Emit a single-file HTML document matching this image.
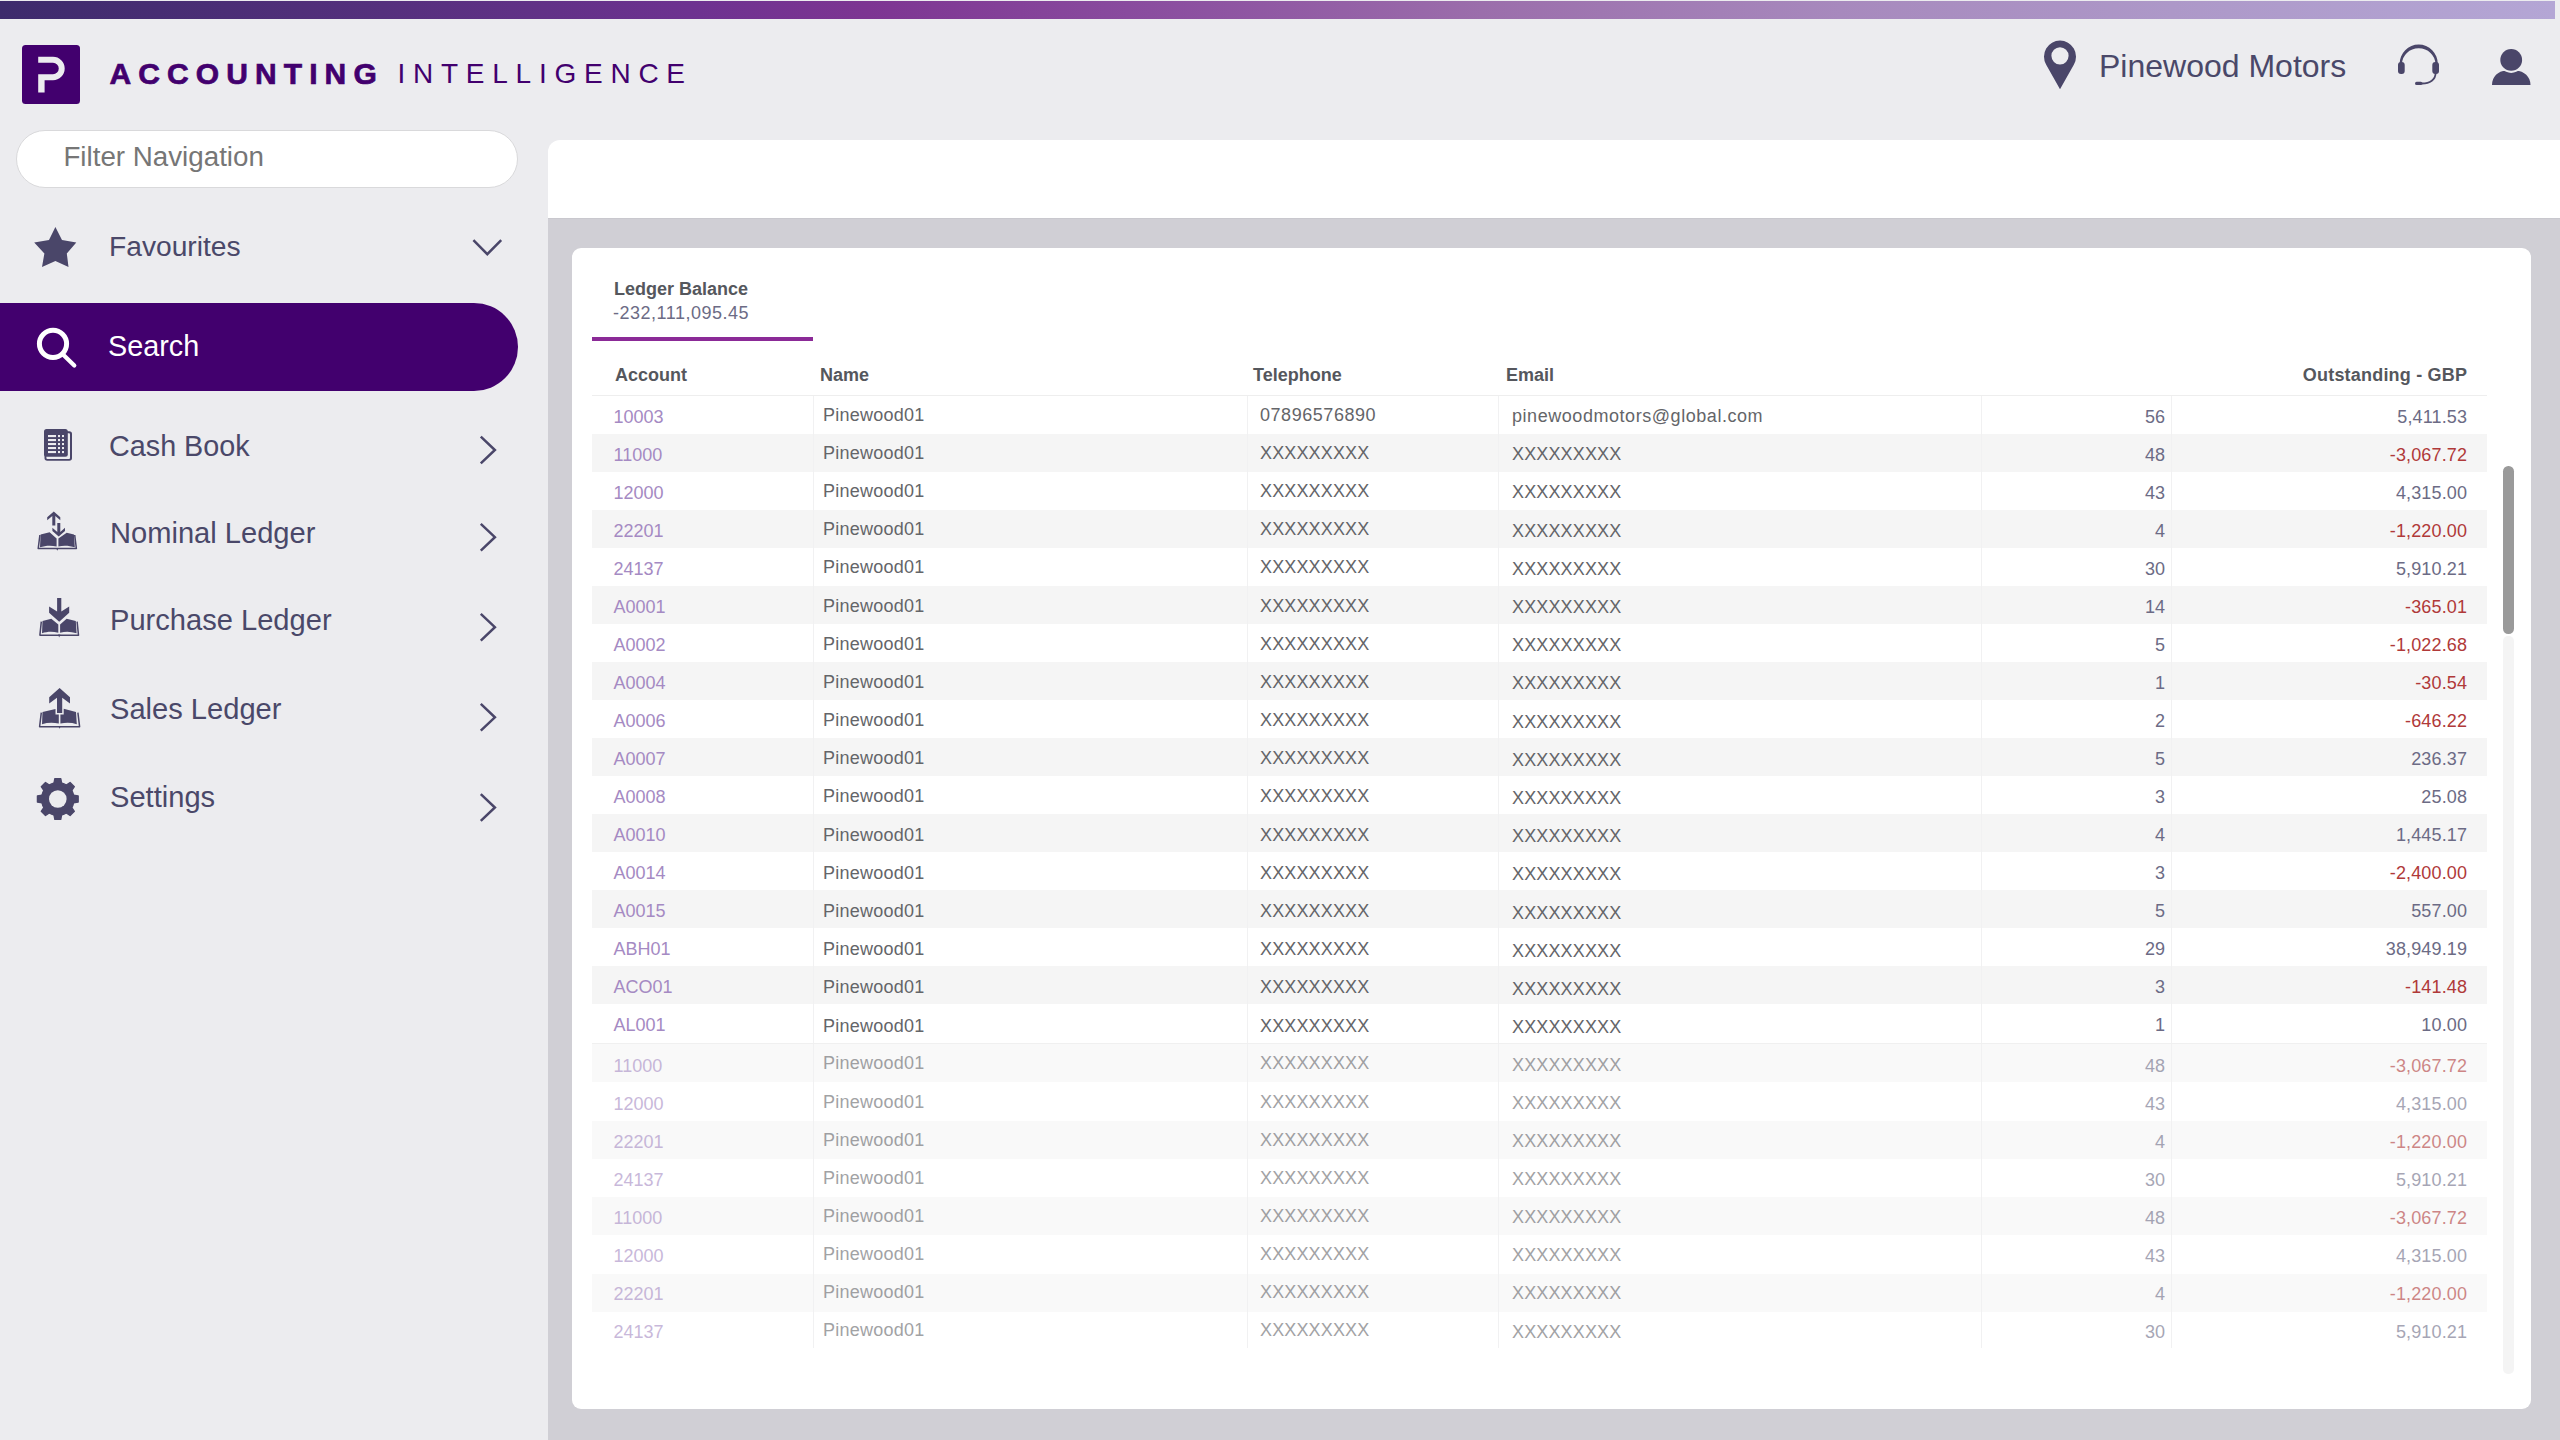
<!DOCTYPE html>
<html><head><meta charset="utf-8">
<style>
html,body{margin:0;padding:0}
body{width:2560px;height:1440px;overflow:hidden;position:relative;background:#ececef;font-family:"Liberation Sans",sans-serif}
.t{position:absolute;line-height:1;white-space:nowrap;font-size:18px}
.abs{position:absolute}
#topbar{position:absolute;left:0;top:1px;width:2555px;height:17.5px;background:linear-gradient(90deg,#3d2b6c 0%,#55307d 15%,#6d3290 27%,#7d3592 34%,#8a4d9f 45%,#9b6eab 58%,#a789bd 72%,#ad98c8 85%,#b4a6d5 100%)}
.side{color:#4a4869}
#main{position:absolute;left:548px;top:218px;width:2012px;height:1222px;background:#d0cfd5}
#strip{position:absolute;left:548px;top:140px;width:2012px;height:78px;background:#fff;border-top-left-radius:12px}
#card{position:absolute;left:572px;top:248px;width:1959px;height:1161px;background:#fff;border-radius:9px}
.stripe{position:absolute;left:592px;width:1895px;background:#f5f5f5}
.stripe.f{background:#f9f9f9}
.sep{position:absolute;top:396px;width:1px;height:952px;background:#f1f1f2}
.acc{color:#a58ac3}
.nm{color:#646569}
.num{color:#6c6b85}
.neg{color:#b03939}
.fd{opacity:.6}
.hd{color:#55575d;font-weight:bold}
</style></head>
<body>
<div id="topbar"></div>

<!-- logo -->
<svg class="abs" style="left:22px;top:45px" width="58" height="59" viewBox="0 0 58 59">
<rect x="0" y="0" width="58" height="59" rx="3.5" fill="#42006e"/>
<path fill="#ececef" fill-rule="evenodd" d="M16.2 11.8 H31 A11.7 11.7 0 0 1 31 35.2 H22.6 V47.5 H16.2 V29.3 H31 A5.75 5.75 0 0 0 31 17.8 H16.2 Z"/>
</svg>
<div class="t" style="left:109.5px;top:58.61px;font-size:30px;font-weight:bold;color:#42006e;letter-spacing:7.1px;-webkit-text-stroke:0.7px #42006e">ACCOUNTING</div>
<div class="t" style="left:397.5px;top:60.30px;font-size:28px;color:#42006e;letter-spacing:7.75px">INTELLIGENCE</div>

<!-- header right -->
<svg class="abs" style="left:2044px;top:40px" width="32" height="51" viewBox="0 0 32 51">
<path fill="#4a4669" fill-rule="evenodd" d="M16 49.3 L2.05 24.43 A16 16 0 1 1 29.95 24.43 Z M16 7.2 A8.6 8.6 0 1 0 16 24.4 A8.6 8.6 0 1 0 16 7.2 Z"/>
</svg>
<div class="t side" style="left:2099px;top:49.9px;font-size:32px;color:#4a4869">Pinewood Motors</div>
<svg class="abs" style="left:2396px;top:42px" width="46" height="46" viewBox="0 0 46 46">
<path d="M3.6 22 A19.1 19.6 0 0 1 41.8 22 L39.4 22 A16.7 15.7 0 0 0 6 22 Z" fill="#4a4669"/>
<rect x="2" y="20" width="6.7" height="12" rx="3" fill="#4a4669"/>
<rect x="36.3" y="20" width="6.7" height="12" rx="3" fill="#4a4669"/>
<path d="M39.6 31 C39.6 37.5 34 41.5 26 41.5" fill="none" stroke="#4a4669" stroke-width="1.8"/>
<rect x="19" y="39.8" width="7.5" height="3.3" rx="1.65" fill="#4a4669"/>
</svg>
<svg class="abs" style="left:2488px;top:46px" width="46" height="42" viewBox="2488 46 46 42">
<path fill="#4a4669" d="M2492 85 C2492 77 2498 70.8 2506 70.8 H2516 C2524 70.8 2530.5 77 2530.5 85 Z"/>
<circle cx="2511.2" cy="59.9" r="13" fill="#ececef"/>
<circle cx="2511.2" cy="59.9" r="10.9" fill="#4a4669"/>
</svg>

<!-- sidebar -->
<div class="abs" style="left:16px;top:130px;width:500px;height:56px;border:1px solid #d9d9db;border-radius:29px;background:#fff"></div>
<div class="t" style="left:63.4px;top:142.91px;font-size:27.75px;color:#767676">Filter Navigation</div>

<svg class="abs" style="left:30px;top:222px" width="52" height="50" viewBox="30 222 52 50">
<polygon fill="#4a4669" points="55.4,226.9 62,240 76.3,242.5 66.8,253.4 68.5,267 55.4,261 42,267 44.4,253.4 34.2,242.5 49,240"/>
</svg>
<div class="t side" style="left:109px;top:232.13px;font-size:28.2px">Favourites</div>
<svg class="abs" style="left:468px;top:234px" width="40" height="26" viewBox="468 234 40 26">
<polyline points="473.4,240.2 487.3,254.2 501.2,240.2" fill="none" stroke="#4a4669" stroke-width="2.5"/>
</svg>

<div class="abs" style="left:0;top:303px;width:518px;height:88px;background:#42006e;border-radius:0 44px 44px 0"></div>
<svg class="abs" style="left:30px;top:320px" width="52" height="52" viewBox="30 320 52 52">
<circle cx="53" cy="343.8" r="13.6" fill="none" stroke="#fff" stroke-width="5"/>
<line x1="63" y1="354.5" x2="74.3" y2="365.5" stroke="#fff" stroke-width="4.2" stroke-linecap="round"/>
</svg>
<div class="t" style="left:108px;top:331.62px;font-size:28.8px;color:#fff">Search</div>

<!-- cash book -->
<svg class="abs" style="left:40px;top:425px" width="36" height="40" viewBox="40 425 36 40">
<rect x="44.5" y="431.3" width="27.5" height="29.5" rx="2.8" fill="#4a4669"/>
<rect x="46.4" y="433.2" width="23.6" height="25.7" rx="1" fill="#ececef"/>
<rect x="44" y="429" width="23.8" height="27.8" rx="2.5" fill="#4a4669"/>
<g fill="#ececef">
<rect x="48" y="435" width="8" height="2.1"/><rect x="58" y="435" width="2" height="2.1"/><rect x="62" y="435" width="2" height="2.1"/>
<rect x="48" y="439" width="8" height="2.1"/><rect x="58" y="439" width="2" height="2.1"/><rect x="62" y="439" width="2" height="2.1"/>
<rect x="48" y="443" width="8" height="2.1"/><rect x="58" y="443" width="2" height="2.1"/><rect x="62" y="443" width="2" height="2.1"/>
<rect x="48" y="447" width="8" height="2.1"/><rect x="58" y="447" width="2" height="2.1"/><rect x="62" y="447" width="2" height="2.1"/>
<rect x="48" y="451" width="8" height="2.1"/><rect x="58" y="451" width="2" height="2.1"/><rect x="62" y="451" width="2" height="2.1"/>
</g>
</svg>
<div class="t side" style="left:109px;top:431.66px;font-size:28.75px">Cash Book</div>

<!-- nominal ledger icon -->
<svg class="abs" style="left:30px;top:505px" width="60" height="60" viewBox="0 0 60 60">
<g fill="#4a4669">
<path d="M10.6 29.6 L19.6 27.3 L26.6 33.4 L26.6 41.6 C21 40 15 40.6 10 42.3 Z"/>
<path d="M44 29.6 L36.7 27.8 L28.4 33.4 L28.4 41.6 C33.5 40 39.5 40.6 44.8 42.3 Z"/>
<polyline points="9.9,30 8.2,43.6 46.4,43.6 44.7,30" fill="none" stroke="#4a4669" stroke-width="1.5" stroke-linejoin="round"/><path d="M26.1 43 L28.5 43 L27.3 45.8 Z"/>
<path d="M23.8 6.6 L30.3 12.2 L30.3 15.2 L25.3 11 L25.3 20.4 L22.3 20.4 L22.3 11 L17.2 15.2 L17.2 12.2 Z"/>
<path d="M28.7 31.6 L22.4 25.9 L22.4 22.8 L27.3 27.1 L27.3 17.9 L30.3 17.9 L30.3 27.1 L35 22.8 L35 25.9 Z"/>
</g>
</svg>
<div class="t side" style="left:110px;top:518.77px;font-size:29.1px">Nominal Ledger</div>

<!-- purchase ledger icon -->
<svg class="abs" style="left:30px;top:590px" width="60" height="60" viewBox="0 0 60 60">
<g fill="#4a4669">
<path d="M12.5 31 L21.3 28.8 L28.3 34.6 L28.3 42.8 C22.5 41.3 17 41.6 12 43.3 Z"/>
<path d="M45.8 31 L36.6 28.8 L30.1 34.6 L30.1 42.8 C35.5 41.3 41 41.6 46.6 43.3 Z"/>
<polyline points="11.3,31.6 9.9,45.2 48.5,45.2 47.1,31.6" fill="none" stroke="#4a4669" stroke-width="1.5" stroke-linejoin="round"/><path d="M28 44.6 L30.4 44.6 L29.2 47.4 Z"/>
<path d="M27.1 7.9 L31.3 7.9 L31.3 21.5 L39.2 16.5 L39.2 22.8 L29.2 31.7 L19.1 22.8 L19.1 16.5 L27.1 21.5 Z"/>
</g>
</svg>
<div class="t side" style="left:110px;top:606.37px;font-size:29.1px">Purchase Ledger</div>

<!-- sales ledger icon -->
<svg class="abs" style="left:30px;top:680px" width="60" height="60" viewBox="0 0 60 60">
<g fill="#4a4669">
<path d="M12.5 32 L25.5 29 L25.5 34.5 L28.8 34.5 L28.8 43.6 C23 42.3 17.5 42.5 12 44.2 Z"/>
<path d="M46 32 L33.7 28.7 L33.7 34.5 L30.4 34.5 L30.4 43.6 C36 42.3 41.5 42.5 46.8 44.2 Z"/>
<polyline points="11.3,32.6 9.6,46.7 49.6,46.7 47.9,32.6" fill="none" stroke="#4a4669" stroke-width="1.5" stroke-linejoin="round"/><path d="M28.4 46 L30.8 46 L29.6 48.8 Z"/>
<path d="M29.6 8.1 L40 17.3 L40 23.4 L32.2 17.8 L32.2 32.9 L27 32.9 L27 17.8 L19.2 23.4 L19.2 17.3 Z"/>
</g>
</svg>
<div class="t side" style="left:110px;top:695.17px;font-size:29.1px">Sales Ledger</div>

<!-- settings gear -->
<svg class="abs" style="left:30px;top:772px" width="56" height="56" viewBox="-27.8 -27 56 56">
<g fill="#4a4669" stroke="#4a4669" stroke-width="1.3" stroke-linejoin="round">
<circle cx="0" cy="0" r="16.3"/>
<path d="M-3 -20.4 H3 L4.2 -14 H-4.2 Z" transform="rotate(0)"/><path d="M-3 -20.4 H3 L4.2 -14 H-4.2 Z" transform="rotate(45)"/><path d="M-3 -20.4 H3 L4.2 -14 H-4.2 Z" transform="rotate(90)"/><path d="M-3 -20.4 H3 L4.2 -14 H-4.2 Z" transform="rotate(135)"/><path d="M-3 -20.4 H3 L4.2 -14 H-4.2 Z" transform="rotate(180)"/><path d="M-3 -20.4 H3 L4.2 -14 H-4.2 Z" transform="rotate(225)"/><path d="M-3 -20.4 H3 L4.2 -14 H-4.2 Z" transform="rotate(270)"/><path d="M-3 -20.4 H3 L4.2 -14 H-4.2 Z" transform="rotate(315)"/>
</g>
<circle cx="0" cy="0" r="8.8" fill="#ececef"/>
</svg>
<div class="t side" style="left:110px;top:782.77px;font-size:29.1px">Settings</div>

<!-- chevrons right -->
<svg class="abs" style="left:470px;top:420px" width="40" height="420" viewBox="470 420 40 420">
<g fill="none" stroke="#4a4669" stroke-width="2.5">
<polyline points="480.8,436.6 494.9,450.0 480.8,463.4"/>
<polyline points="480.8,523.8 494.9,537.2 480.8,550.6"/>
<polyline points="480.8,613.8 494.9,627.2 480.8,640.6"/>
<polyline points="480.8,703.9 494.9,717.3 480.8,730.7"/>
<polyline points="480.8,794.1 494.9,807.5 480.8,820.9"/>
</g>
</svg>

<!-- main -->
<div id="strip"></div>
<div id="main"></div>
<div class="abs" style="left:548px;top:218px;width:2012px;height:1px;background:#c9c8ce"></div>
<div id="card"></div>

<div class="t hd" style="left:614px;top:279.76px;font-size:18px">Ledger Balance</div>
<div class="t num" style="left:613px;top:304.16px;font-size:18px;letter-spacing:0.5px">-232,111,095.45</div>
<div class="abs" style="left:592px;top:337px;width:221px;height:4px;background:#8b2a97"></div>

<div class="t hd" style="left:615px;top:365.76px;font-size:18px">Account</div>
<div class="t hd" style="left:820px;top:365.76px;font-size:18px">Name</div>
<div class="t hd" style="left:1253px;top:365.76px;font-size:18px">Telephone</div>
<div class="t hd" style="left:1506px;top:365.76px;font-size:18px">Email</div>
<div class="t hd" style="right:92.8px;top:365.76px;font-size:18px;letter-spacing:0.2px">Outstanding - GBP</div>
<div class="abs" style="left:592px;top:395px;width:1895px;height:1px;background:#eeeeee"></div>

<div class="t acc" style="left:613.50px;top:408.16px;">10003</div>
<div class="t nm" style="left:823.00px;top:405.56px;letter-spacing:0.25px;">Pinewood01</div>
<div class="t nm" style="left:1260.00px;top:405.56px;letter-spacing:0.55px;">07896576890</div>
<div class="t nm" style="left:1512.00px;top:407.06px;letter-spacing:0.55px;">pinewoodmotors@global.com</div>
<div class="t num" style="right:395.00px;top:408.16px;">56</div>
<div class="t num" style="right:92.85px;top:408.16px;letter-spacing:0.15px;">5,411.53</div>
<div class="stripe" style="top:433.90px;height:38.00px"></div>
<div class="t acc" style="left:613.50px;top:446.16px;">11000</div>
<div class="t nm" style="left:823.00px;top:443.75px;letter-spacing:0.25px;">Pinewood01</div>
<div class="t nm" style="left:1260.00px;top:443.75px;letter-spacing:0.15px;">XXXXXXXXX</div>
<div class="t nm" style="left:1512.00px;top:445.25px;letter-spacing:0.15px;">XXXXXXXXX</div>
<div class="t num" style="right:395.00px;top:446.16px;">48</div>
<div class="t neg" style="right:92.85px;top:446.16px;letter-spacing:0.15px;">-3,067.72</div>
<div class="t acc" style="left:613.50px;top:484.16px;">12000</div>
<div class="t nm" style="left:823.00px;top:481.94px;letter-spacing:0.25px;">Pinewood01</div>
<div class="t nm" style="left:1260.00px;top:481.94px;letter-spacing:0.15px;">XXXXXXXXX</div>
<div class="t nm" style="left:1512.00px;top:483.44px;letter-spacing:0.15px;">XXXXXXXXX</div>
<div class="t num" style="right:395.00px;top:484.16px;">43</div>
<div class="t num" style="right:92.85px;top:484.16px;letter-spacing:0.15px;">4,315.00</div>
<div class="stripe" style="top:509.90px;height:38.00px"></div>
<div class="t acc" style="left:613.50px;top:522.16px;">22201</div>
<div class="t nm" style="left:823.00px;top:520.13px;letter-spacing:0.25px;">Pinewood01</div>
<div class="t nm" style="left:1260.00px;top:520.13px;letter-spacing:0.15px;">XXXXXXXXX</div>
<div class="t nm" style="left:1512.00px;top:521.63px;letter-spacing:0.15px;">XXXXXXXXX</div>
<div class="t num" style="right:395.00px;top:522.16px;">4</div>
<div class="t neg" style="right:92.85px;top:522.16px;letter-spacing:0.15px;">-1,220.00</div>
<div class="t acc" style="left:613.50px;top:560.16px;">24137</div>
<div class="t nm" style="left:823.00px;top:558.32px;letter-spacing:0.25px;">Pinewood01</div>
<div class="t nm" style="left:1260.00px;top:558.32px;letter-spacing:0.15px;">XXXXXXXXX</div>
<div class="t nm" style="left:1512.00px;top:559.82px;letter-spacing:0.15px;">XXXXXXXXX</div>
<div class="t num" style="right:395.00px;top:560.16px;">30</div>
<div class="t num" style="right:92.85px;top:560.16px;letter-spacing:0.15px;">5,910.21</div>
<div class="stripe" style="top:585.90px;height:38.00px"></div>
<div class="t acc" style="left:613.50px;top:598.16px;">A0001</div>
<div class="t nm" style="left:823.00px;top:596.51px;letter-spacing:0.25px;">Pinewood01</div>
<div class="t nm" style="left:1260.00px;top:596.51px;letter-spacing:0.15px;">XXXXXXXXX</div>
<div class="t nm" style="left:1512.00px;top:598.01px;letter-spacing:0.15px;">XXXXXXXXX</div>
<div class="t num" style="right:395.00px;top:598.16px;">14</div>
<div class="t neg" style="right:92.85px;top:598.16px;letter-spacing:0.15px;">-365.01</div>
<div class="t acc" style="left:613.50px;top:636.16px;">A0002</div>
<div class="t nm" style="left:823.00px;top:634.70px;letter-spacing:0.25px;">Pinewood01</div>
<div class="t nm" style="left:1260.00px;top:634.70px;letter-spacing:0.15px;">XXXXXXXXX</div>
<div class="t nm" style="left:1512.00px;top:636.20px;letter-spacing:0.15px;">XXXXXXXXX</div>
<div class="t num" style="right:395.00px;top:636.16px;">5</div>
<div class="t neg" style="right:92.85px;top:636.16px;letter-spacing:0.15px;">-1,022.68</div>
<div class="stripe" style="top:661.90px;height:38.00px"></div>
<div class="t acc" style="left:613.50px;top:674.16px;">A0004</div>
<div class="t nm" style="left:823.00px;top:672.89px;letter-spacing:0.25px;">Pinewood01</div>
<div class="t nm" style="left:1260.00px;top:672.89px;letter-spacing:0.15px;">XXXXXXXXX</div>
<div class="t nm" style="left:1512.00px;top:674.39px;letter-spacing:0.15px;">XXXXXXXXX</div>
<div class="t num" style="right:395.00px;top:674.16px;">1</div>
<div class="t neg" style="right:92.85px;top:674.16px;letter-spacing:0.15px;">-30.54</div>
<div class="t acc" style="left:613.50px;top:712.16px;">A0006</div>
<div class="t nm" style="left:823.00px;top:711.08px;letter-spacing:0.25px;">Pinewood01</div>
<div class="t nm" style="left:1260.00px;top:711.08px;letter-spacing:0.15px;">XXXXXXXXX</div>
<div class="t nm" style="left:1512.00px;top:712.58px;letter-spacing:0.15px;">XXXXXXXXX</div>
<div class="t num" style="right:395.00px;top:712.16px;">2</div>
<div class="t neg" style="right:92.85px;top:712.16px;letter-spacing:0.15px;">-646.22</div>
<div class="stripe" style="top:737.90px;height:38.00px"></div>
<div class="t acc" style="left:613.50px;top:750.16px;">A0007</div>
<div class="t nm" style="left:823.00px;top:749.27px;letter-spacing:0.25px;">Pinewood01</div>
<div class="t nm" style="left:1260.00px;top:749.27px;letter-spacing:0.15px;">XXXXXXXXX</div>
<div class="t nm" style="left:1512.00px;top:750.77px;letter-spacing:0.15px;">XXXXXXXXX</div>
<div class="t num" style="right:395.00px;top:750.16px;">5</div>
<div class="t num" style="right:92.85px;top:750.16px;letter-spacing:0.15px;">236.37</div>
<div class="t acc" style="left:613.50px;top:788.16px;">A0008</div>
<div class="t nm" style="left:823.00px;top:787.46px;letter-spacing:0.25px;">Pinewood01</div>
<div class="t nm" style="left:1260.00px;top:787.46px;letter-spacing:0.15px;">XXXXXXXXX</div>
<div class="t nm" style="left:1512.00px;top:788.96px;letter-spacing:0.15px;">XXXXXXXXX</div>
<div class="t num" style="right:395.00px;top:788.16px;">3</div>
<div class="t num" style="right:92.85px;top:788.16px;letter-spacing:0.15px;">25.08</div>
<div class="stripe" style="top:813.90px;height:38.00px"></div>
<div class="t acc" style="left:613.50px;top:826.16px;">A0010</div>
<div class="t nm" style="left:823.00px;top:825.65px;letter-spacing:0.25px;">Pinewood01</div>
<div class="t nm" style="left:1260.00px;top:825.65px;letter-spacing:0.15px;">XXXXXXXXX</div>
<div class="t nm" style="left:1512.00px;top:827.15px;letter-spacing:0.15px;">XXXXXXXXX</div>
<div class="t num" style="right:395.00px;top:826.16px;">4</div>
<div class="t num" style="right:92.85px;top:826.16px;letter-spacing:0.15px;">1,445.17</div>
<div class="t acc" style="left:613.50px;top:864.16px;">A0014</div>
<div class="t nm" style="left:823.00px;top:863.84px;letter-spacing:0.25px;">Pinewood01</div>
<div class="t nm" style="left:1260.00px;top:863.84px;letter-spacing:0.15px;">XXXXXXXXX</div>
<div class="t nm" style="left:1512.00px;top:865.34px;letter-spacing:0.15px;">XXXXXXXXX</div>
<div class="t num" style="right:395.00px;top:864.16px;">3</div>
<div class="t neg" style="right:92.85px;top:864.16px;letter-spacing:0.15px;">-2,400.00</div>
<div class="stripe" style="top:889.90px;height:38.00px"></div>
<div class="t acc" style="left:613.50px;top:902.16px;">A0015</div>
<div class="t nm" style="left:823.00px;top:902.03px;letter-spacing:0.25px;">Pinewood01</div>
<div class="t nm" style="left:1260.00px;top:902.03px;letter-spacing:0.15px;">XXXXXXXXX</div>
<div class="t nm" style="left:1512.00px;top:903.53px;letter-spacing:0.15px;">XXXXXXXXX</div>
<div class="t num" style="right:395.00px;top:902.16px;">5</div>
<div class="t num" style="right:92.85px;top:902.16px;letter-spacing:0.15px;">557.00</div>
<div class="t acc" style="left:613.50px;top:940.16px;">ABH01</div>
<div class="t nm" style="left:823.00px;top:940.22px;letter-spacing:0.25px;">Pinewood01</div>
<div class="t nm" style="left:1260.00px;top:940.22px;letter-spacing:0.15px;">XXXXXXXXX</div>
<div class="t nm" style="left:1512.00px;top:941.72px;letter-spacing:0.15px;">XXXXXXXXX</div>
<div class="t num" style="right:395.00px;top:940.16px;">29</div>
<div class="t num" style="right:92.85px;top:940.16px;letter-spacing:0.15px;">38,949.19</div>
<div class="stripe" style="top:965.90px;height:38.00px"></div>
<div class="t acc" style="left:613.50px;top:978.16px;">ACO01</div>
<div class="t nm" style="left:823.00px;top:978.41px;letter-spacing:0.25px;">Pinewood01</div>
<div class="t nm" style="left:1260.00px;top:978.41px;letter-spacing:0.15px;">XXXXXXXXX</div>
<div class="t nm" style="left:1512.00px;top:979.91px;letter-spacing:0.15px;">XXXXXXXXX</div>
<div class="t num" style="right:395.00px;top:978.16px;">3</div>
<div class="t neg" style="right:92.85px;top:978.16px;letter-spacing:0.15px;">-141.48</div>
<div class="t acc" style="left:613.50px;top:1016.16px;">AL001</div>
<div class="t nm" style="left:823.00px;top:1016.60px;letter-spacing:0.25px;">Pinewood01</div>
<div class="t nm" style="left:1260.00px;top:1016.60px;letter-spacing:0.15px;">XXXXXXXXX</div>
<div class="t nm" style="left:1512.00px;top:1018.10px;letter-spacing:0.15px;">XXXXXXXXX</div>
<div class="t num" style="right:395.00px;top:1016.16px;">1</div>
<div class="t num" style="right:92.85px;top:1016.16px;letter-spacing:0.15px;">10.00</div>
<div class="stripe f" style="top:1044.20px;height:38.22px"></div>
<div class="t acc fd" style="left:613.50px;top:1057.46px;">11000</div>
<div class="t nm fd" style="left:823.00px;top:1054.46px;letter-spacing:0.25px;">Pinewood01</div>
<div class="t nm fd" style="left:1260.00px;top:1054.46px;letter-spacing:0.15px;">XXXXXXXXX</div>
<div class="t nm fd" style="left:1512.00px;top:1055.96px;letter-spacing:0.15px;">XXXXXXXXX</div>
<div class="t num fd" style="right:395.00px;top:1057.46px;">48</div>
<div class="t neg fd" style="right:92.85px;top:1057.46px;letter-spacing:0.15px;">-3,067.72</div>
<div class="t acc fd" style="left:613.50px;top:1095.41px;">12000</div>
<div class="t nm fd" style="left:823.00px;top:1092.54px;letter-spacing:0.25px;">Pinewood01</div>
<div class="t nm fd" style="left:1260.00px;top:1092.54px;letter-spacing:0.15px;">XXXXXXXXX</div>
<div class="t nm fd" style="left:1512.00px;top:1094.04px;letter-spacing:0.15px;">XXXXXXXXX</div>
<div class="t num fd" style="right:395.00px;top:1095.41px;">43</div>
<div class="t num fd" style="right:92.85px;top:1095.41px;letter-spacing:0.15px;">4,315.00</div>
<div class="stripe f" style="top:1120.64px;height:38.22px"></div>
<div class="t acc fd" style="left:613.50px;top:1133.36px;">22201</div>
<div class="t nm fd" style="left:823.00px;top:1130.62px;letter-spacing:0.25px;">Pinewood01</div>
<div class="t nm fd" style="left:1260.00px;top:1130.62px;letter-spacing:0.15px;">XXXXXXXXX</div>
<div class="t nm fd" style="left:1512.00px;top:1132.12px;letter-spacing:0.15px;">XXXXXXXXX</div>
<div class="t num fd" style="right:395.00px;top:1133.36px;">4</div>
<div class="t neg fd" style="right:92.85px;top:1133.36px;letter-spacing:0.15px;">-1,220.00</div>
<div class="t acc fd" style="left:613.50px;top:1171.31px;">24137</div>
<div class="t nm fd" style="left:823.00px;top:1168.70px;letter-spacing:0.25px;">Pinewood01</div>
<div class="t nm fd" style="left:1260.00px;top:1168.70px;letter-spacing:0.15px;">XXXXXXXXX</div>
<div class="t nm fd" style="left:1512.00px;top:1170.20px;letter-spacing:0.15px;">XXXXXXXXX</div>
<div class="t num fd" style="right:395.00px;top:1171.31px;">30</div>
<div class="t num fd" style="right:92.85px;top:1171.31px;letter-spacing:0.15px;">5,910.21</div>
<div class="stripe f" style="top:1197.08px;height:38.22px"></div>
<div class="t acc fd" style="left:613.50px;top:1209.26px;">11000</div>
<div class="t nm fd" style="left:823.00px;top:1206.78px;letter-spacing:0.25px;">Pinewood01</div>
<div class="t nm fd" style="left:1260.00px;top:1206.78px;letter-spacing:0.15px;">XXXXXXXXX</div>
<div class="t nm fd" style="left:1512.00px;top:1208.28px;letter-spacing:0.15px;">XXXXXXXXX</div>
<div class="t num fd" style="right:395.00px;top:1209.26px;">48</div>
<div class="t neg fd" style="right:92.85px;top:1209.26px;letter-spacing:0.15px;">-3,067.72</div>
<div class="t acc fd" style="left:613.50px;top:1247.21px;">12000</div>
<div class="t nm fd" style="left:823.00px;top:1244.86px;letter-spacing:0.25px;">Pinewood01</div>
<div class="t nm fd" style="left:1260.00px;top:1244.86px;letter-spacing:0.15px;">XXXXXXXXX</div>
<div class="t nm fd" style="left:1512.00px;top:1246.36px;letter-spacing:0.15px;">XXXXXXXXX</div>
<div class="t num fd" style="right:395.00px;top:1247.21px;">43</div>
<div class="t num fd" style="right:92.85px;top:1247.21px;letter-spacing:0.15px;">4,315.00</div>
<div class="stripe f" style="top:1273.52px;height:38.22px"></div>
<div class="t acc fd" style="left:613.50px;top:1285.16px;">22201</div>
<div class="t nm fd" style="left:823.00px;top:1282.94px;letter-spacing:0.25px;">Pinewood01</div>
<div class="t nm fd" style="left:1260.00px;top:1282.94px;letter-spacing:0.15px;">XXXXXXXXX</div>
<div class="t nm fd" style="left:1512.00px;top:1284.44px;letter-spacing:0.15px;">XXXXXXXXX</div>
<div class="t num fd" style="right:395.00px;top:1285.16px;">4</div>
<div class="t neg fd" style="right:92.85px;top:1285.16px;letter-spacing:0.15px;">-1,220.00</div>
<div class="t acc fd" style="left:613.50px;top:1323.11px;">24137</div>
<div class="t nm fd" style="left:823.00px;top:1321.02px;letter-spacing:0.25px;">Pinewood01</div>
<div class="t nm fd" style="left:1260.00px;top:1321.02px;letter-spacing:0.15px;">XXXXXXXXX</div>
<div class="t nm fd" style="left:1512.00px;top:1322.52px;letter-spacing:0.15px;">XXXXXXXXX</div>
<div class="t num fd" style="right:395.00px;top:1323.11px;">30</div>
<div class="t num fd" style="right:92.85px;top:1323.11px;letter-spacing:0.15px;">5,910.21</div>

<div class="sep" style="left:813px"></div>
<div class="sep" style="left:1247px"></div>
<div class="sep" style="left:1498px"></div>
<div class="sep" style="left:1981px"></div>
<div class="sep" style="left:2170.5px"></div>
<div class="abs" style="left:592px;top:1043px;width:1895px;height:1.2px;background:#f0f0f0"></div>

<!-- scrollbar -->
<div class="abs" style="left:2503px;top:636px;width:10.5px;height:738px;border-radius:5px;background:#f4f4f4"></div>
<div class="abs" style="left:2503px;top:466px;width:10.5px;height:168px;border-radius:5.25px;background:#9a9a9a"></div>
</body></html>
